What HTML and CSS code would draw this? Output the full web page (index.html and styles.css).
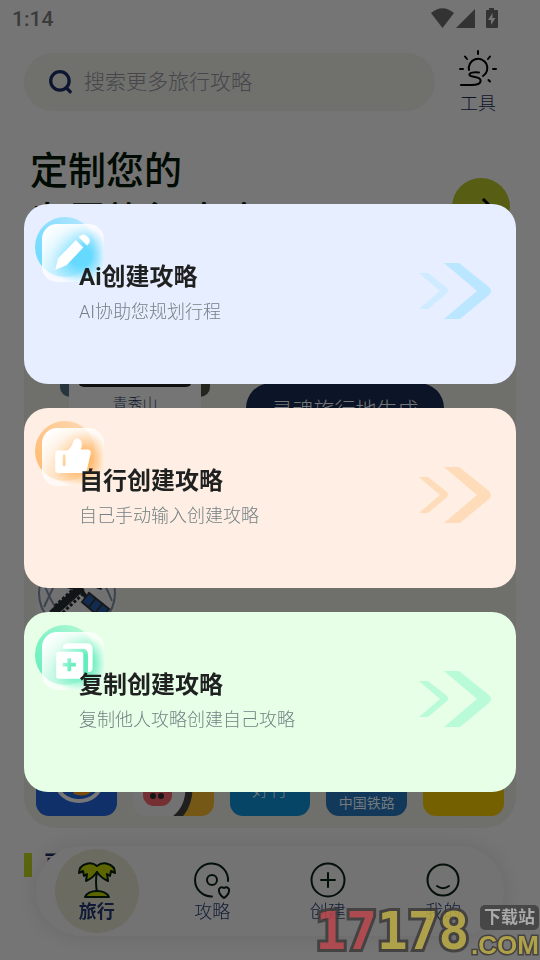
FILE: index.html
```html
<!DOCTYPE html>
<html lang="zh-CN">
<head>
<meta charset="utf-8">
<meta name="viewport" content="width=device-width, initial-scale=1">
<title>旅行攻略</title>
<link rel="stylesheet" href="styles.css">
</head>
<body>
<div class="app">
  <header class="status">
    <span class="clock">1:14</span>
    <svg class="status-icons" viewBox="0 0 68 22" aria-hidden="true">
      <path d="M1 5Q12.500-4.500 24 5L12.500 20z"/>
      <path d="M26 20L45 1V20z"/>
      <path d="M59 0h5v2h3q1 0 1 1v16q0 1-1 1H57q-1 0-1-1V3q0-1 1-1h2z"/>
      <path class="bolt" d="M62.500 5v5h3L61 17v-5h-3z"/>
    </svg>
  </header>

  <div class="top-row">
    <label class="search">
      <svg viewBox="0 0 24 24" aria-hidden="true"><circle cx="11" cy="11" r="8.500"/><path d="M17 17.500L20.500 21"/></svg>
      <input type="search" placeholder="搜索更多旅行攻略" aria-label="搜索">
    </label>
    <button class="tools" type="button">
      <svg viewBox="0 0 38 38" aria-hidden="true">
        <path d="M10 20a9.300 9.300 0 1 1 14 6M19 1v3M6 6.500l2 2.500M31 6.500l-2 2.500M1 19h3M34 19h3M29.500 30l1.500 1.500"/>
        <path d="M20 22.500c-5-.5-10 0-9.500 2.500s10 1 11 5c.8 4-4 5-9 5H2"/>
      </svg>
      <span>工具</span>
    </button>
  </div>

  <section class="hero">
    <h1>定制您的<br>专属旅行攻略</h1>
    <button class="go" type="button" aria-label="开始">
      <svg viewBox="0 0 30 30" aria-hidden="true"><path d="M3 17h24M17 7l10 10-10 10"/></svg>
    </button>
  </section>

  <section class="panel">
    <div class="spots">
      <div class="photo-stack">
        <i class="photo-back"></i>
        <figure><div class="photo"></div><figcaption>青秀山</figcaption></figure>
      </div>
      <button class="generate" type="button">灵魂旅行地生成</button>
    </div>
    <div class="emblem">
      <svg viewBox="0 0 80 80" aria-hidden="true">
        <circle class="ring" cx="41" cy="40" r="38"/>
        <path class="orbit" d="M4 20Q14 50 28 66M25 18L8 54M57 18Q68 27 76 48"/>
        <path class="station" d="M16 61L46 34"/>
        <path class="teeth" d="M19 53L43 31M23 63L48 40"/>
        <path class="hull" d="M27 32l11 3 14-5 14 5M46 38l5 8"/>
        <path class="solar" d="M46 49l7-9 20 16-7 10z"/>
        <path class="grid-line" d="M53 54l7-9M60 59l7-9"/>
      </svg>
    </div>
    <div class="tiles">
      <a class="tile blue" href="#" aria-label="出行"><svg viewBox="0 0 81 81"><ellipse class="swirl" cx="43" cy="48" rx="22" ry="18"/><path class="swirl-gold" d="M38 57q12 5 20-6"/></svg></a>
      <a class="tile pig" href="#" aria-label="飞猪"><svg viewBox="0 0 81 81"><path class="gold" d="M50 0h31v81H46q14-12 13-30z"/><path class="curve" d="M42 84Q57 72 56 50"/><rect class="nose" x="10" y="46" width="29" height="25" rx="11"/><circle cx="20" cy="61" r="3"/><circle cx="28" cy="61" r="3"/></svg></a>
      <a class="tile cyan" href="#"><span>好行</span></a>
      <a class="tile rail" href="#"><span>中国铁路</span></a>
      <a class="tile yellow" href="#" aria-label="美团"></a>
    </div>
  </section>

  <h2 class="next">更多目的地</h2>
</div>

<nav class="nav">
  <a class="active" href="#">
    <svg viewBox="0 0 40 40" aria-hidden="true">
      <path class="leaf" d="M20 6Q15 2 9 4Q2 6 2 13l4-2 1 5 3-2-1 7q7-3 11-9q4 6 11 9l-1-7 3 2 1-5 4 2q0-7-7-9Q25 2 20 6z"/>
      <path d="M20 12q-2 9 0 20"/><path class="leaf" d="M8 37q3-6 12-6t12 6z"/>
    </svg>
    <span>旅行</span>
  </a>
  <a href="#">
    <svg viewBox="0 0 40 40" aria-hidden="true"><path d="M36 21A16.500 16.500 0 1 0 20 36.500"/><circle cx="20" cy="20" r="5"/><path d="M32 28q-3-2-5 1-1 5 5 9 6-4 5-9-2-3-5-1z"/></svg>
    <span>攻略</span>
  </a>
  <a href="#">
    <svg viewBox="0 0 40 40" aria-hidden="true"><circle cx="20" cy="20" r="16.500"/><path d="M20 13v14M13 20h14"/></svg>
    <span>创建</span>
  </a>
  <a href="#">
    <svg viewBox="0 0 40 40" aria-hidden="true"><circle cx="20" cy="20" r="15.500"/><path d="M14 26q6 4.500 12 0"/></svg>
    <span>我的</span>
  </a>
</nav>

<div class="overlay" role="dialog" aria-label="创建攻略">
  <button class="card ai" type="button">
    <span class="badge">
      <svg viewBox="0 0 62 62" aria-hidden="true"><path d="M12 49l3-12L34 17l8 8L24 44z"/><path d="M37 14q5-5 9-1 6 5 0 10z"/></svg>
    </span>
    <span class="copy"><strong>Ai创建攻略</strong><small>AI协助您规划行程</small></span>
    <svg class="arrows" viewBox="0 0 74 58" aria-hidden="true"><path class="soft" d="M1 11h9L29 26q2 3 0 5L10 47H1L22 29z"/><path d="M26 1h15L71 25q4 4 0 8L42 57H26L59 29z"/></svg>
  </button>
  <button class="card self" type="button">
    <span class="badge">
      <svg viewBox="0 0 62 62" aria-hidden="true"><path fill-rule="evenodd" d="M15 24h10q5-4 7-11 3-4 7 0 3 4 0 10h8q3 0 3 4l-4 17q-1 4-5 4H15q-3 0-3-4V28q0-4 3-4zM20 30v9q0 2 1.500 2t1.500-2v-9q0-2-1.500-2t-1.500 2z"/></svg>
    </span>
    <span class="copy"><strong>自行创建攻略</strong><small>自己手动输入创建攻略</small></span>
    <svg class="arrows" viewBox="0 0 74 58" aria-hidden="true"><path class="soft" d="M1 11h9L29 26q2 3 0 5L10 47H1L22 29z"/><path d="M26 1h15L71 25q4 4 0 8L42 57H26L59 29z"/></svg>
  </button>
  <button class="card clone" type="button">
    <span class="badge">
      <svg viewBox="0 0 62 62" aria-hidden="true"><path d="M20 18q0-6 6-6h20q6 0 6 6v20q0 5-5 5V24q0-6-6-6z"/><path fill-rule="evenodd" d="M16 21h23q3 0 3 3v23q0 3-3 3H16q-3 0-3-3V24q0-3 3-3zM25 28v5h-5v4h5v5h4v-5h5v-4h-5v-5z"/></svg>
    </span>
    <span class="copy"><strong>复制创建攻略</strong><small>复制他人攻略创建自己攻略</small></span>
    <svg class="arrows" viewBox="0 0 74 58" aria-hidden="true"><path class="soft" d="M1 11h9L29 26q2 3 0 5L10 47H1L22 29z"/><path d="M26 1h15L71 25q4 4 0 8L42 57H26L59 29z"/></svg>
  </button>
</div>

<div class="watermark">
  <span class="digits"><b>17</b>178</span>
  <span class="site"><span class="bubble">下载站</span><span class="com">.COM</span></span>
</div>
</body>
</html>
```
FILE: styles.css
```css
* { box-sizing: border-box; }
body {
  margin: 0;
  background: #757575;
  color: #0f1428;
  font-family: Roboto, "Noto Sans CJK SC", sans-serif;
}
button { border: 0; padding: 0; font: inherit; color: inherit; background: none; }
a { color: inherit; text-decoration: none; }
svg { display: block; flex: none; }
h1, h2, figure { margin: 0; }

.app { height: 100vh; overflow: hidden; }
.status {
  display: flex;
  justify-content: space-between;
  align-items: center;
  height: 37px;
  padding: 0 42px 0 12px;
}
.clock { font-size: 21px; font-weight: 500; color: #3b3b3b; }
.status-icons { width: 68px; height: 22px; fill: #333; }
.status-icons .bolt { fill: #757575; }

.top-row { display: flex; height: 90px; padding: 12px 24px 0; align-items: flex-start; }
.search {
  display: flex;
  flex: 1;
  align-items: center;
  gap: 10px;
  height: 58px;
  margin-top: 4px;
  padding: 0 24px;
  border-radius: 29px;
  background: #70706d;
}
.search svg { width: 26px; height: 26px; fill: none; stroke: #0c1630; stroke-width: 3; stroke-linecap: round; }
.search input {
  flex: 1;
  min-width: 0;
  padding: 0;
  border: 0;
  outline: 0;
  background: none;
  font: 300 21px Roboto, "Noto Sans CJK SC", sans-serif;
}
.search input::placeholder { color: #45454b; opacity: 1; }
.tools { display: flex; flex-direction: column; align-items: center; width: 81px; padding: 1px 0 0 5px; }
.tools svg { width: 38px; height: 38px; fill: none; stroke: #000; stroke-width: 2; stroke-linecap: round; }
.tools span { font-size: 18px; font-weight: 300; line-height: 31px; }

.hero { display: flex; justify-content: space-between; height: 165px; padding: 19px 30px 0; }
.hero h1 { font-size: 38px; line-height: 50px; font-weight: 500; color: #020b03; }
.go {
  display: grid;
  place-items: center;
  width: 58px;
  height: 58px;
  margin-top: 32px;
  border-radius: 50%;
  background: #575d13;
}
.go svg { width: 30px; height: 30px; fill: none; stroke: #000; stroke-width: 3; }

.panel {
  height: 536px;
  margin: 0 24px;
  padding: 0 12px 12px;
  border-radius: 32px;
  background: #6f6f6c;
  display: flex;
  flex-direction: column;
}
.spots { display: flex; justify-content: space-between; padding-right: 60px; }
.photo-stack { position: relative; width: 180px; padding-left: 33px; }
.photo-back {
  position: absolute;
  left: 24px;
  top: 20px;
  width: 150px;
  height: 85px;
  border-radius: 10px;
  background: linear-gradient(90deg, #26353e 0 50%, #25251f 50%);
}
figure { position: relative; width: 132px; height: 130px; padding: 10px 9px 0; background: #757575; }
.photo { height: 85px; border-radius: 6px; background: #100f10; }
figcaption { text-align: center; font-size: 15px; line-height: 34px; font-weight: 300; color: #121a2d; }
.generate {
  width: 198px;
  height: 50px;
  margin-top: 91px;
  border-radius: 25px;
  background: #0c1528;
  color: #777;
  font-size: 21px;
  font-weight: 300;
}
.emblem { width: 80px; height: 80px; margin-top: 120px; margin-bottom: auto; background: #717171; }
.emblem svg { width: 80px; height: 80px; fill: none; }
.ring, .orbit { stroke: #3b4250; stroke-width: 2; }
.station { stroke: #111518; stroke-width: 8; }
.teeth { stroke: #111518; stroke-width: 3; stroke-dasharray: 3 2; }
.hull { stroke: #111518; stroke-width: 4; }
.solar { fill: #112c50; stroke: #17191b; stroke-width: 2; }
.grid-line { stroke: #17191b; stroke-width: 2; }
.tiles { display: grid; grid-template-columns: repeat(5, 1fr); gap: 16px; }
.tile {
  display: flex;
  align-items: flex-end;
  justify-content: center;
  height: 81px;
  border-radius: 13px;
  overflow: hidden;
  text-align: center;
}
.tile svg { width: 81px; height: 81px; }
.tile.blue { background: #0f3068; }
.swirl { fill: #0f3068; stroke: #777; stroke-width: 4; }
.swirl-gold { fill: none; stroke: #7b4b08; stroke-width: 4; }
.tile.pig { background: #727272; }
.pig circle { fill: #171717; }
.pig .gold { fill: #755816; }
.pig .curve { fill: none; stroke: #1f1f20; stroke-width: 7; }
.pig .nose { fill: #753033; }
.tile.cyan { background: #064565; color: #73777b; font-size: 18px; font-weight: 300; line-height: 23px; padding-bottom: 15px; }
.tile.rail { background: #12395a; color: #74797d; font-size: 14px; line-height: 26px; }
.tile.yellow { background: #756000; }

.next {
  margin: 25px 24px 0;
  padding-left: 12px;
  border-left: 8px solid #5b6510;
  font-size: 24px;
  line-height: 24px;
  color: #0c1630;
}

.nav {
  position: fixed;
  left: 36px;
  right: 36px;
  bottom: 24px;
  display: grid;
  grid-template-columns: repeat(4, 1fr);
  justify-items: center;
  align-items: center;
  height: 90px;
  padding: 0 3px;
  border-radius: 45px;
  background: #737373;
  box-shadow: 0 0 20px rgba(0, 0, 0, .1);
}
.nav a {
  display: flex;
  flex-direction: column;
  align-items: center;
  width: 84px;
  height: 84px;
  padding-top: 11px;
  border-radius: 50%;
  font-size: 18px;
  font-weight: 300;
  line-height: 24px;
  color: #101a36;
}
.nav svg { width: 40px; height: 40px; fill: none; stroke: #031008; stroke-width: 2; stroke-linecap: round; stroke-linejoin: round; }
.nav .active { background: #6b6b62; font-weight: 700; }
.nav .leaf { fill: #5c6500; }

.overlay {
  position: fixed;
  inset: 0;
  display: flex;
  flex-direction: column;
  justify-content: center;
  gap: 24px;
  padding: 36px 24px 0;
}
.card {
  display: grid;
  grid-template-columns: 55px 1fr 74px;
  height: 180px;
  padding-right: 24px;
  border-radius: 24px;
  text-align: left;
}
.ai { background: #e7eeff; --tint: #66d9ff; --arrow: #bae7ff; --soft: #cfebff; }
.self { background: #feeee3; --tint: #ffb96d; --arrow: #ffdcb9; --soft: #ffdcb9; }
.clone { background: #e6ffe6; --tint: #62eebc; --arrow: #b9fbd9; --soft: #b9fbd9; }
.badge { position: relative; width: 60px; height: 60px; margin: 13px 0 0 11px; border-radius: 50%; background: linear-gradient(60deg, var(--tint), transparent 150%); }
.badge svg {
  position: absolute;
  left: 7px;
  top: 7px;
  width: 62px;
  height: 58px;
  border-radius: 15px;
  fill: #fff;
  box-shadow: inset 0 0 8px rgba(255, 255, 255, .8);
  background:
    linear-gradient(135deg, #fff 8%, rgba(255, 255, 255, 0) 55%),
    radial-gradient(circle at 62% 55%, var(--tint) 20%, rgba(255, 255, 255, .5) 60%);
}
.copy { display: flex; flex-direction: column; padding-top: 57px; z-index: 1; }
.copy strong { font-size: 24px; line-height: 32px; font-weight: 700; color: #1f2020; }
.copy small { margin-top: 5px; font-size: 18px; line-height: 28px; font-weight: 300; color: #748184; }
.arrows { align-self: center; width: 74px; height: 58px; margin-bottom: 6px; fill: var(--arrow); }
.arrows .soft { fill: var(--soft); }

.watermark {
  position: fixed;
  right: 1px;
  bottom: 0;
  display: flex;
  align-items: flex-end;
  gap: 2px;
  pointer-events: none;
  opacity: .85;
}
.digits, .com {
  color: #baaa44;
  font-weight: 700;
  paint-order: stroke fill;
  -webkit-text-stroke: 6px #3e3a3a;
}
.digits { font-family: "DejaVu Sans Mono", "Liberation Mono", monospace; font-size: 51px; line-height: 56px; }
.digits b { color: #b9454c; }
.site { display: flex; flex-direction: column; align-items: flex-end; }
.bubble {
  padding: 0 4px;
  border-radius: 5px;
  background: #404040;
  color: #b4b4b4;
  font-size: 17px;
  font-weight: 700;
  line-height: 25px;
}
.com { font-family: "Liberation Sans", sans-serif; font-size: 26px; line-height: 30px; -webkit-text-stroke-width: 3px; }
```
